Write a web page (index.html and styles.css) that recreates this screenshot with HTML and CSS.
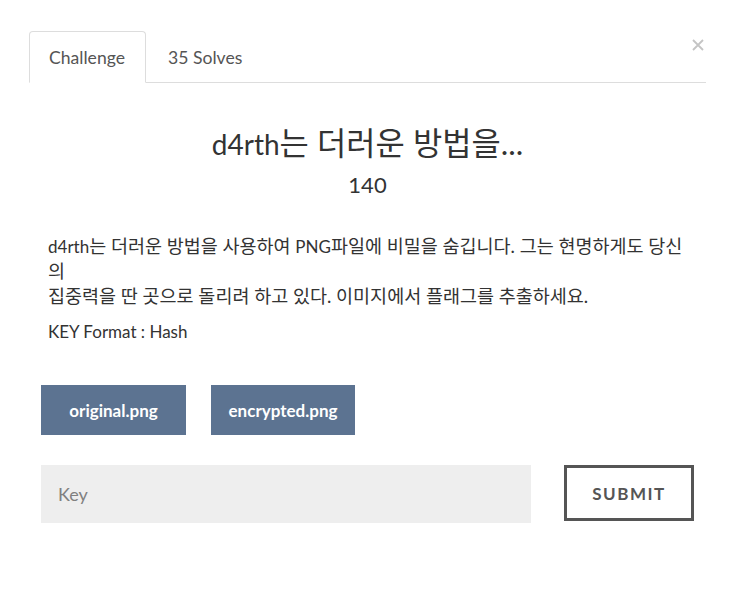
FILE: index.html
```html
<!DOCTYPE html>
<html lang="ko">
<head>
<meta charset="utf-8">
<title>Challenge</title>
<link rel="stylesheet" href="styles.css">
</head>
<body>
<div class="modal">
  <button class="close" type="button" aria-label="Close">
    <svg width="12" height="12" viewBox="0 0 12 12"><path d="M1 1L11 11M11 1L1 11" stroke="#c4c4c4" stroke-width="1.8" fill="none"/></svg>
  </button>
  <div class="tabs">
    <div class="tab active">Challenge</div>
    <div class="tab">35 Solves</div>
  </div>
  <div class="content">
    <h2 class="title">d4rth<span class="ko">는 더러운 방법을...</span></h2>
    <div class="points">140</div>
    <div class="desc">
      <p>d4rth<span class="ko">는 더러운 방법을 사용하여 </span>PNG<span class="ko">파일에 비밀을 숨깁니다. 그는 현명하게도 당신의<br>집중력을 딴 곳으로 돌리려 하고 있다. 이미지에서 플래그를 추출하세요.</span></p>
      <p>KEY Format : Hash</p>
    </div>
    <div class="files">
      <a class="file" href="#">original.png</a>
      <a class="file" href="#">encrypted.png</a>
    </div>
    <div class="submit-row">
      <input class="key" type="text" placeholder="Key">
      <button class="submit" type="button">SUBMIT</button>
    </div>
  </div>
</div>
</body>
</html>
```

FILE: styles.css
```css
html, body {
  margin: 0;
  padding: 0;
  background: #fff;
}
body {
  font-family: Lato, "Noto Sans CJK KR", sans-serif;
  color: #333;
}
.modal {
  position: relative;
  width: 736px;
  height: 589px;
  padding: 31px 30px 0 29px;
  box-sizing: border-box;
}
.close {
  position: absolute;
  top: 39px;
  left: 692px;
  background: none;
  border: 0;
  padding: 0;
  width: 12px;
  height: 12px;
  cursor: pointer;
}
.close svg { display: block; }
.tabs {
  display: flex;
  border-bottom: 1px solid #ddd;
  height: 51px;
}
.tab {
  display: flex;
  align-items: center;
  padding: 0 20px 0 19px;
  font-size: 17.6px;
  color: #555;
  margin-bottom: -1px;
  border: 1px solid transparent;
  border-radius: 4px 4px 0 0;
}
.tab.active {
  border-color: #ddd;
  border-bottom-color: #fff;
}
.tab + .tab { padding-left: 21px; }
.content {
  padding: 0 12px;
}
.title {
  margin: 42px 0 0;
  text-align: center;
  font-weight: 400;
  font-size: 28px;
  line-height: 36px;
  color: #333;
}
.title .ko {
  font-size: 31.8px;
  line-height: 36px;
}
.points {
  text-align: center;
  font-size: 22px;
  line-height: 28px;
  margin-top: 9px;
  color: #333;
}
.desc {
  margin-top: 35px;
  padding-left: 7px;
  font-size: 17px;
  line-height: 25px;
}
.desc .ko {
  font-size: 18.5px;
  line-height: 25px;
}
.desc p {
  margin: 0 0 10px;
}
.files {
  display: flex;
  gap: 25px;
  margin-top: 41px;
}
.file {
  display: flex;
  align-items: center;
  justify-content: center;
  width: 145px;
  height: 50px;
  background: #5c7391;
  color: #fff;
  font-weight: 700;
  font-size: 17px;
  text-decoration: none;
}
.file + .file { width: 144px; }
.submit-row {
  display: flex;
  justify-content: space-between;
  align-items: flex-start;
  margin-top: 30px;
}
.key {
  width: 490px;
  height: 58px;
  box-sizing: border-box;
  border: 0;
  background: #eee;
  padding: 0 17px;
  font-family: Lato, sans-serif;
  font-size: 18px;
  color: #333;
  outline: none;
}
.key::placeholder { color: #808080; }
.submit {
  width: 130px;
  height: 56px;
  box-sizing: border-box;
  border: 3px solid #555;
  background: #fff;
  font-family: Lato, sans-serif;
  font-weight: 700;
  font-size: 17px;
  letter-spacing: 1.5px;
  color: #555;
  cursor: pointer;
}
```
